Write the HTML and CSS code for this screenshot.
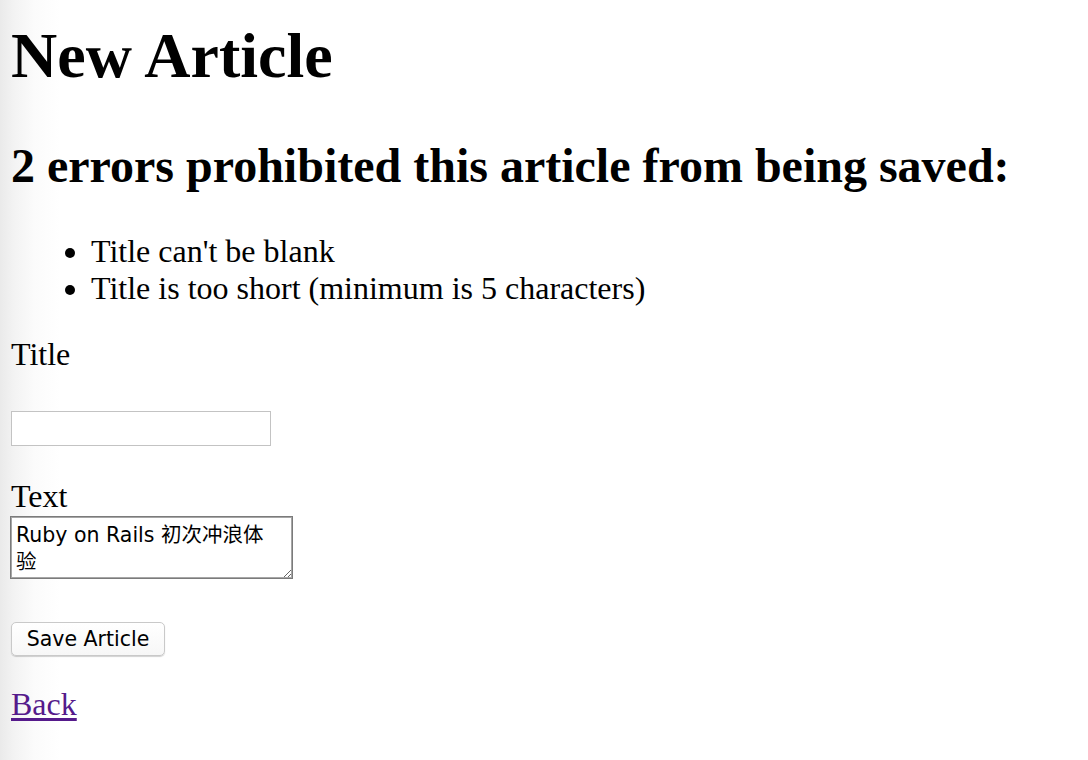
FILE: index.html
```html
<!DOCTYPE html>
<html lang="en">
<head>
<meta charset="utf-8">
<title>New Article</title>
<link rel="stylesheet" href="styles.css">
</head>
<body>
<h1 class="page-title">New Article</h1>
<form class="article-form" action="#" method="post">
  <div class="error-explanation">
    <h2 class="error-title">2 errors prohibited this article from being saved:</h2>
    <ul class="error-list">
      <li>Title can't be blank</li>
      <li>Title is too short (minimum is 5 characters)</li>
    </ul>
  </div>
  <div class="field field-title">
    <label class="field-label" for="article_title">Title</label>
    <input class="title-input" type="text" id="article_title" name="article[title]">
  </div>
  <div class="field field-text">
    <label class="field-label" for="article_text">Text</label>
    <textarea class="text-input" id="article_text" name="article[text]">Ruby on Rails 初次冲浪体验</textarea>
  </div>
  <div class="actions">
    <button class="save-button" type="submit">Save Article</button>
  </div>
</form>
<a class="back-link" href="#">Back</a>
</body>
</html>
```

FILE: styles.css
```css
html {
  background: #fff;
}
body {
  margin: 0;
  padding: 0 0 0 11px;
  min-height: 760px;
  box-sizing: border-box;
  font-family: "Liberation Serif", "Times New Roman", serif;
  font-size: 32px;
  line-height: 1.15;
  color: #000;
  background: linear-gradient(to right, #eaeaea 0, #f3f3f3 14px, #fbfbfb 34px, #fff 60px);
  display: flex;
  flex-direction: column;
  align-items: flex-start;
}
.page-title {
  font-size: 64px;
  font-weight: bold;
  line-height: 1.15;
  margin: 19px 0 0;
}
.article-form {
  display: flex;
  flex-direction: column;
  align-items: flex-start;
}
.error-title {
  font-size: 48px;
  font-weight: bold;
  line-height: 1.15;
  margin: 45px 0 0;
  white-space: nowrap;
}
.error-list {
  margin: 40px 0 30px;
  padding-left: 80px;
}
.field {
  display: flex;
  flex-direction: column;
  align-items: flex-start;
}
.field-label {
  display: block;
  line-height: 36.8px;
}
.title-input {
  margin: 38px 0 0;
  width: 260px;
  height: 35px;
  box-sizing: border-box;
  border: 1px solid #c3c3c3;
  background: #fff;
  padding: 2px 6px;
  font-family: "DejaVu Sans", sans-serif;
  font-size: 18px;
  outline: none;
}
.field-text {
  margin-top: 32px;
}
.text-input {
  margin: 1px 0 0 -1px;
  width: 283px;
  height: 63px;
  box-sizing: border-box;
  border: 1px solid #7b7b7b;
  box-shadow: inset 0 0 0 1px #a6a6a6;
  padding: 5px 14px 2px 5px;
  font-family: "DejaVu Sans", "Noto Sans CJK SC", sans-serif;
  font-size: 20.5px;
  line-height: 27px;
  color: #000;
  background: #fff;
  outline: none;
  overflow: hidden;
}
.actions {
  margin-top: 43px;
}
.save-button {
  display: block;
  width: 154px;
  height: 34px;
  box-sizing: border-box;
  border: 1px solid #c9c9c9;
  border-radius: 5px;
  background: linear-gradient(#ffffff, #f7f7f7);
  box-shadow: 0 1px 1px rgba(0, 0, 0, 0.18);
  font-family: "DejaVu Sans", sans-serif;
  font-size: 20.5px;
  color: #000;
  padding: 0;
}
.back-link {
  margin-top: 30px;
  color: #551a8b;
  text-decoration: underline;
  text-underline-offset: 3px;
  line-height: 1.15;
}
```
